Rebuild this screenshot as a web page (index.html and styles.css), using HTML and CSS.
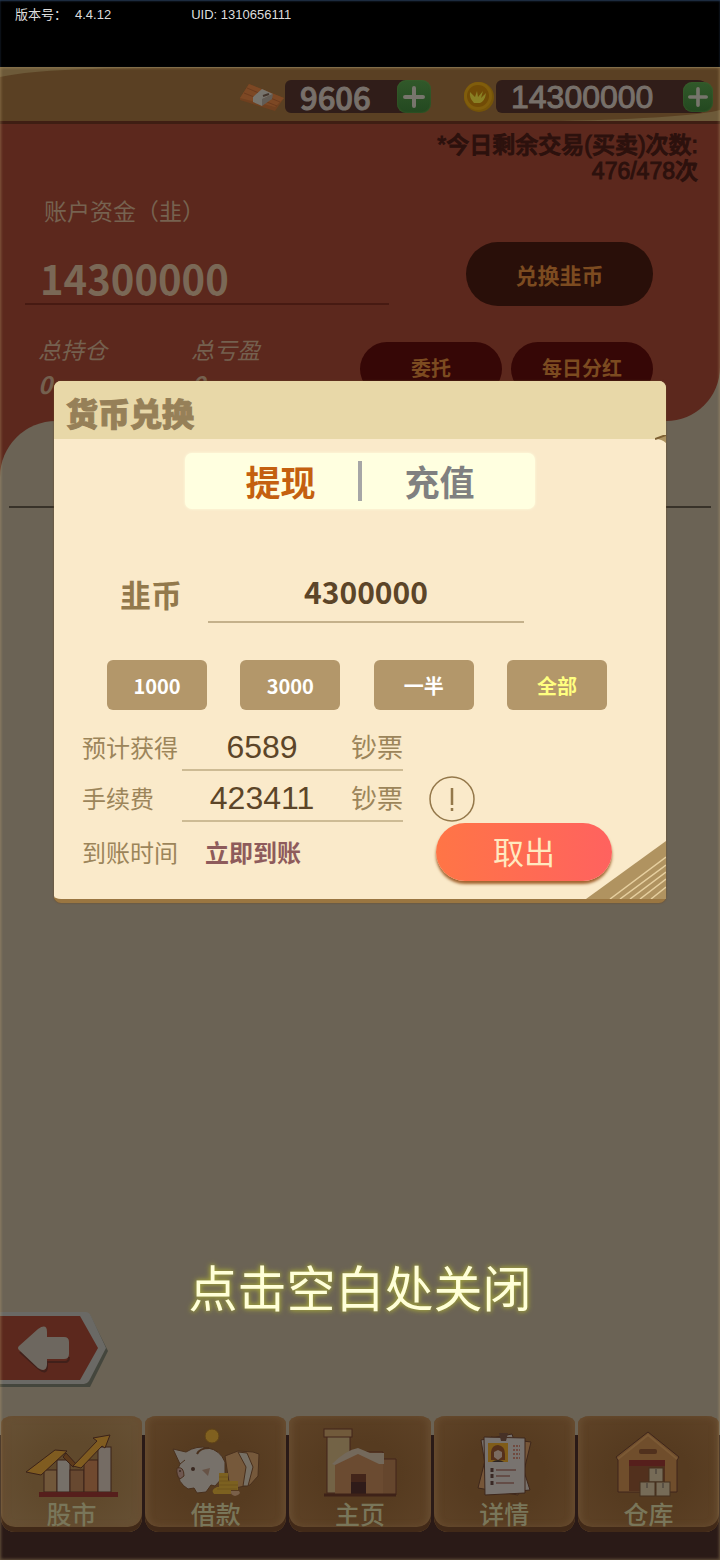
FILE: index.html
```html
<!DOCTYPE html>
<html lang="zh-CN">
  <head>
    <meta charset="UTF-8" />
    <meta name="viewport" content="width=device-width, initial-scale=1.0" />
    <title>货币兑换</title>
    <link rel="stylesheet" href="styles.css">
  </head>
  <body>
    <div class="status">
      <div class="version"><span>版本号：</span><span>4.4.12</span></div>
      <span>UID: 1310656111</span>
    </div>
    <div class="stage">
      <header class="top-bar">
        <svg class="top-bar-shape" viewBox="0 0 720 54" preserveAspectRatio="none" aria-hidden="true">
          <path d="M0 10 Q40 1 160 1 L720 1 V43 Q690 51 560 54 L0 54 Z" fill="#5a4023" />
        </svg>
        <div class="currency">
          <svg width="46" height="34" viewBox="0 0 46 34" aria-hidden="true">
            <path d="M1 18 L10 4 L45 18 L36 31 L1 20 Z" fill="#70401f" />
            <path d="M1 18 L10 4 L45 18 L36 27 Z" fill="#7d4824" />
            <path d="M8 8 L41 22 M5 13 L38 26" stroke="#6b3b1d" stroke-width="1" />
            <path d="M14 17 L23 9 L34 14 L24 19 L23 26 L14 22 Z" fill="#77746d" />
            <path d="M23 19 L34 14 L33 19 L23 26 Z" fill="#625c55" />
            <path d="M24 16 L30 14" stroke="#43352c" stroke-width="2" />
          </svg>
          <div class="pill">
            <span class="cash-value">9606</span>
            <button class="plus" aria-label="增加钞票">
              <svg width="22" height="22" viewBox="0 0 22 22"><path d="M11 2 V20 M2 11 H20" /></svg>
            </button>
          </div>
        </div>
        <div class="currency">
          <svg width="33" height="34" viewBox="0 0 33 34" aria-hidden="true">
            <circle cx="16" cy="17" r="15" fill="#755409" />
            <circle cx="15" cy="16" r="14" fill="#805d0c" />
            <circle cx="15" cy="16" r="11" fill="#714b06" />
            <path d="M11 23 Q6 18 7 12 L12 17 L14 11 L15 17 L20 11 L18 18 L23 13 Q22 21 17 23 Z" fill="#898024" />
          </svg>
          <div class="pill pill-wide">
            <span class="coin-value">14300000</span>
            <button class="plus plus-small" aria-label="增加韭币">
              <svg width="20" height="20" viewBox="0 0 22 22"><path d="M11 2 V20 M2 11 H20" /></svg>
            </button>
          </div>
        </div>
      </header>

      <section class="account">
        <p class="trades">*今日剩余交易(买卖)次数:<br>476/478次</p>
        <p class="account-label">账户资金（韭）</p>
        <div class="account-row">
          <div class="amount">14300000</div>
          <button class="exchange">兑换韭币</button>
        </div>
        <div class="account-row totals-row">
          <div class="totals">
            <div>总持仓<b>0</b></div>
            <div>总亏盈<b>0</b></div>
          </div>
          <div class="actions">
            <button>委托</button>
            <button>每日分红</button>
          </div>
        </div>
      </section>

      <div class="sheet-back">
        <main class="sheet">
          <hr>
          <a class="back" href="#" aria-label="返回">
            <svg width="110" height="78" viewBox="0 0 110 78">
              <path d="M0 3 H90 L108 39 L90 75 H0 Z" fill="#44463d" />
              <path d="M0 0 H86 Q89 0 91 4 L106 36 L89 69 Q87 72 84 72 H0 Z" fill="#6a6965" />
              <path d="M0 4 H80 L98 36 L80 68 H0 Z" fill="#5c281d" />
              <path d="M20 40 L39 57 Q47 63 47 54 V50 H65 Q69 50 69 45" fill="none" stroke="#41201a" stroke-width="2" />
              <path d="M19 34 L38 17 Q47 11 47 20 V25 H64 Q69 25 69 30 V42 Q69 47 64 47 H47 V53 Q46 61 38 56 L19 38 Q17 36 19 34 Z" fill="#6d675f" />
            </svg>
          </a>
        </main>
      </div>

      <nav class="tab-bar">
        <a class="tab active" href="#">
          <svg viewBox="0 0 96 72" aria-hidden="true">
            <g stroke="#3b2218" stroke-width="1">
              <rect x="20" y="42" width="13" height="22" fill="#71573a" />
              <rect x="33" y="32" width="13" height="32" fill="#767069" />
              <rect x="46" y="42" width="14" height="22" fill="#674830" />
              <rect x="60" y="32" width="14" height="32" fill="#70492f" />
              <rect x="74" y="19" width="13" height="45" fill="#756c64" />
              <path d="M42 25 L53 37 L49 39 L39 29 Z" fill="#5d3a1b" />
              <path d="M2 44 L31 22 L43 23 L17 47 Z" fill="#805c20" />
              <path d="M49 38 L73 13 L69 10 L86 7 L81 20 L78 18 L57 40 Z" fill="#805c20" />
            </g>
            <rect x="15" y="64" width="79" height="5" fill="#561f1c" />
          </svg>
          <span>股市</span>
        </a>
        <a class="tab" href="#">
          <svg viewBox="0 0 96 72" aria-hidden="true">
            <circle cx="44" cy="8" r="7" fill="#80601f" stroke="#5e4218" />
            <g stroke="#49301d" stroke-width="1">
              <path d="M57 28 L70 23 L85 24 L91 26 L90 48 L82 57 L62 61 Z" fill="#76593b" />
              <path d="M70 24 L79 25 L85 39 L80 58 L75 58 L78 39 Z" fill="#777065" />
              <path d="M5 21 L18 24 Q29 17 40 20 Q52 22 57 34 L57 47 L47 58 L43 57 L38 64 L29 65 L26 60 L20 61 Q10 55 9 43 L12 36 Z" fill="#77716a" />
              <path d="M9 40 Q16 38 16 48 L12 51 Q8 47 9 40 Z" fill="#6e5750" />
              <path d="M12 36 L17 32" />
              <path d="M29 26 Q32 20 41 20" fill="none" stroke-width="2" />
            </g>
            <circle cx="25" cy="41" r="2" fill="#392820" />
            <circle cx="12" cy="43" r="1" fill="#392820" />
            <path d="M34 42 L42 40 L40 48 Z" fill="#675346" />
            <path d="M51 45 H60 V53 H70 V62 H63 V66 H46 Q42 62 49 59 H51 Z" fill="#7c6120" />
            <path d="M51 49 H60 M51 53 H62 M51 57 H70 M49 61 H69" stroke="#6f541c" />
            <path d="M63 63 H71 Q74 66 67 68 Q62 67 63 63 Z" fill="#796049" />
          </svg>
          <span>借款</span>
        </a>
        <a class="tab" href="#">
          <svg viewBox="0 0 96 72" aria-hidden="true">
            <g stroke="#43251a" stroke-width="1">
              <rect x="15" y="8" width="23" height="57" fill="#736346" />
              <rect x="12" y="1" width="28" height="8" fill="#715a3b" />
              <path d="M54 24 H71 V31 H84 V67 H64 Z" fill="#65462d" />
            </g>
            <path d="M23 34 L46 22 L71 36 V67 H23 Z" fill="#6b4b31" />
            <path d="M20 36 Q34 22 46 20 L58 25 H72 V36 L67 36 L46 26 L23 37 Z" fill="#74695b" />
            <rect x="39" y="46" width="15" height="20" fill="#2f1b19" />
            <path d="M39 50 H54" stroke="#43251a" stroke-width="8" />
            <path d="M12 67 H84" stroke="#3e2218" stroke-width="3" />
          </svg>
          <span>主页</span>
        </a>
        <a class="tab" href="#">
          <svg viewBox="0 0 96 72" aria-hidden="true">
            <g stroke="#3e271b" stroke-width="1">
              <path d="M35 9 L75 14 L62 67 L22 60 Z" fill="#765638" />
              <path d="M25 12 L56 6 L74 62 L34 66 Z" fill="#77706a" />
              <path d="M28 9 L69 10 L69 65 L29 67 Z" fill="#78736f" />
            </g>
            <path d="M43 5 H52 L50 13 H45 Z" fill="#463127" />
            <rect x="32" y="15" width="20" height="19" fill="#805c18" />
            <path d="M35 32 V24 Q36 17 42 17 Q49 18 49 26 V32 Z" fill="#55301b" />
            <path d="M38 24 L42 22 L46 24 V29 L42 32 L38 29 Z" fill="#7b6b60" />
            <path d="M36 34 Q42 30 48 34 Z" fill="#2e2523" />
            <path d="M57 18 H64 M57 22 H64 M57 26 H64 M57 30 H64" stroke="#704a40" stroke-width="2" stroke-dasharray="2 1" />
            <path d="M40 42 H60 M40 48 H54 M40 55 H58" stroke="#5e413b" stroke-width="1.5" />
            <path d="M36 40 V44 M36 46 V50 M36 53 V57" stroke="#392824" stroke-width="3" />
          </svg>
          <span>详情</span>
        </a>
        <a class="tab" href="#">
          <svg viewBox="0 0 96 72" aria-hidden="true">
            <path d="M48 4 L79 29 L77 32 V64 H18 V32 L16 29 Z" fill="#704e2c" stroke="#3e251b" />
            <path d="M18 31 L48 7 L77 31" fill="none" stroke="#7c5a35" stroke-width="2" />
            <rect x="39" y="21" width="18" height="5" rx="2" fill="#51311d" />
            <rect x="29" y="32" width="36" height="31" fill="#52301d" />
            <rect x="29" y="32" width="36" height="6" fill="#561f1c" />
            <g fill="#766b57" stroke="#44301f" stroke-width="1">
              <rect x="49" y="40" width="14" height="14" />
              <rect x="40" y="54" width="15" height="14" />
              <rect x="56" y="54" width="14" height="14" />
            </g>
            <path d="M56 41 V46 M47 55 V60 M63 55 V60" stroke="#5a5145" stroke-width="2" />
          </svg>
          <span>仓库</span>
        </a>
      </nav>

      <!-- exchange dialog over the market page -->
      <div class="overlay">
        <div class="dialog" role="dialog" aria-labelledby="dialog-title">
          <div class="dialog-header">
            <h1 id="dialog-title">货币兑换</h1>
          </div>
          <svg class="fold" width="11" height="8" viewBox="0 0 11 8" aria-hidden="true">
            <path d="M0 4 L11 0 V8 Q7 4 0 4 Z" fill="#ad9360" />
            <path d="M0 4 L11 0" stroke="#7d6033" stroke-width="2" />
          </svg>
          <form class="dialog-body">
            <div class="mode">
              <button type="button" class="selected">提现</button>
              <button type="button">充值</button>
            </div>
            <div class="coin-row">
              <label for="coins">韭币</label>
              <input type="text" id="coins" value="4300000" />
            </div>
            <div class="presets">
              <button type="button">1000</button>
              <button type="button">3000</button>
              <button type="button">一半</button>
              <button type="button" class="selected">全部</button>
            </div>
            <div class="detail">
              <span class="detail-label">预计获得</span>
              <div class="detail-value"><output>6589</output><span>钞票</span></div>
            </div>
            <div class="detail">
              <span class="detail-label">手续费</span>
              <div class="detail-value"><output>423411</output><span>钞票</span></div>
              <button type="button" class="info" aria-label="手续费说明">
                <svg width="46" height="46" viewBox="0 0 46 46">
                  <circle cx="23" cy="23" r="22" fill="none" stroke="#94784a" stroke-width="1.5" />
                  <path d="M23 12 V29 M23 32 V35" stroke="#94784a" stroke-width="2.5" />
                </svg>
              </button>
            </div>
            <div class="detail detail-last">
              <span class="detail-label">到账时间</span>
              <strong>立即到账</strong>
              <button type="submit" class="withdraw">取出</button>
            </div>
          </form>
          <svg class="corner" width="80" height="58" viewBox="0 0 80 58" aria-hidden="true">
            <path d="M0 58 L80 0 V58 Z" fill="#b09360" />
            <path d="M24 58 L80 16 M34 58 L80 24 M44 58 L80 31 M54 58 L80 38 M65 58 L80 46" stroke="#e6cf9f" stroke-width="1.5" />
          </svg>
        </div>
        <button class="close-hint">点击空白处关闭</button>
      </div>
    </div>
  </body>
</html>
```

FILE: styles.css
```css
* {
  box-sizing: border-box;
}
body {
  margin: 0;
  min-height: 100vh;
  display: flex;
  flex-direction: column;
  background-color: #6b6355;
  font-family: "Noto Sans CJK SC", sans-serif;
}
button {
  padding: 0;
  border: none;
  background: none;
  font-family: inherit;
  cursor: pointer;
}
p,
h1 {
  margin: 0;
}
svg {
  display: block;
}

/* version line */
.status {
  display: flex;
  gap: 80px;
  height: 67px;
  padding: 5px 15px;
  background-color: #000;
  box-shadow: inset 0 1px 2px #263b56;
  color: #ddd;
  font-family: "Liberation Sans", "Noto Sans CJK SC", sans-serif;
  font-size: 13px;
  line-height: 20px;
}
.version {
  display: flex;
  gap: 8px;
}
.stage {
  position: relative;
  flex-grow: 1;
  display: flex;
  flex-direction: column;
}

/* currencies */
.top-bar {
  position: relative;
  display: flex;
  justify-content: flex-end;
  align-items: center;
  gap: 32px;
  height: 57px;
  padding: 5px 7px 0 0;
  background-color: #6d5a39;
  border-bottom: 3px solid #3f1e13;
}
.top-bar-shape {
  position: absolute;
  top: 0;
  left: 0;
  width: 100%;
  height: 100%;
}
.currency {
  position: relative;
  display: flex;
  align-items: center;
}
.pill {
  display: flex;
  justify-content: space-between;
  align-items: center;
  width: 146px;
  height: 33px;
  padding-left: 15px;
  background-color: #301d19;
  border-radius: 6px 16px 16px 6px;
  color: #77706a;
}
.pill-wide {
  width: 217px;
}
.cash-value {
  font-size: 31px;
  font-weight: 500;
  line-height: 32px;
  -webkit-text-stroke: 1px #77706a;
}
.coin-value {
  font-family: "Liberation Sans", sans-serif;
  font-size: 32px;
  line-height: 32px;
  -webkit-text-stroke: 1px #77706a;
}
.plus {
  display: flex;
  justify-content: center;
  align-items: center;
  width: 34px;
  height: 33px;
  border-radius: 9px;
  background: linear-gradient(#31592a, #234820);
  box-shadow: inset 0 0 2px #41632c;
}
.plus-small {
  width: 30px;
  height: 30px;
}
.plus path {
  stroke: #77756c;
  stroke-width: 4;
  stroke-linecap: round;
}

/* account panel */
.account {
  height: 297px;
  padding-top: 8px;
  background-color: #5c281d;
  border-bottom-right-radius: 54px;
}
.trades {
  padding-right: 22px;
  color: #2c110d;
  font-family: "Liberation Sans", "Noto Sans CJK SC", sans-serif;
  font-size: 23px;
  font-weight: 500;
  line-height: 26px;
  text-align: right;
  -webkit-text-stroke: 1px #2c110d;
}
.account-label {
  margin: 11px 0 17px 44px;
  color: #766250;
  font-size: 23px;
  line-height: 30px;
}
.account-row {
  display: flex;
  justify-content: space-between;
  padding: 0 67px 0 25px;
}
.amount {
  width: 58%;
  height: 63px;
  padding-left: 15px;
  border-bottom: 2px solid #471a12;
  color: #7a6856;
  font-size: 40px;
  font-weight: bold;
  line-height: 72px;
}
.exchange {
  width: 187px;
  height: 64px;
  border-radius: 32px;
  background-color: #290f09;
  color: #7c4b20;
  font-size: 22px;
  font-weight: bold;
}
.totals-row {
  margin-top: 26px;
}
.totals {
  display: flex;
  gap: 84px;
  padding-left: 13px;
  color: #74604f;
  font-size: 23px;
  font-style: italic;
  line-height: 34px;
}
.totals b {
  display: block;
  font-size: 24px;
  line-height: 36px;
}
.actions {
  display: flex;
  gap: 9px;
  padding-top: 10px;
}
.actions button {
  width: 142px;
  height: 54px;
  padding-bottom: 3px;
  border-radius: 27px;
  background-color: #360706;
  color: #7c4b20;
  font-size: 20px;
  font-weight: bold;
}

/* stock list */
.sheet-back {
  flex-grow: 1;
  display: flex;
  background: linear-gradient(90deg, #5c281d 50%, #6b6355 50%);
}
.sheet {
  flex-grow: 1;
  display: flex;
  flex-direction: column;
  justify-content: space-between;
  padding: 85px 0 26px;
  background-color: #6b6355;
  border-top-left-radius: 56px;
}
.sheet hr {
  align-self: stretch;
  height: 2px;
  margin: 0 9px;
  border: none;
  background-color: #383229;
}
.back {
  align-self: flex-start;
}

/* bottom navigation */
.tab-bar {
  display: grid;
  grid-template-columns: repeat(5, 1fr);
  gap: 3px;
  padding: 0 1px 28px;
  background: linear-gradient(#6b6355 19px, #2a1a17 19px);
}
.tab {
  display: flex;
  flex-direction: column;
  align-items: center;
  height: 116px;
  padding-top: 12px;
  border-radius: 12px 12px 14px 14px / 8px 8px 14px 14px;
  background: radial-gradient(#563b20 40%, #5f4327);
  box-shadow: inset 0 -5px #412918, inset 0 -2px 6px 3px #684d31;
  color: #79765a;
  font-size: 25px;
  font-weight: 500;
  line-height: 26px;
  text-decoration: none;
}
.tab.active {
  background: radial-gradient(#60492c 40%, #685236);
}
.tab svg {
  width: 96px;
  height: 72px;
}

/* dialog */
.overlay {
  position: absolute;
  top: 0;
  right: 0;
  bottom: 0;
  left: 0;
  display: flex;
  flex-direction: column;
  align-items: center;
  padding-top: 314px;
  box-shadow: inset 0 0 3px 1px rgba(205, 180, 125, 0.35);
}
.dialog {
  position: relative;
  width: 85%;
  background-color: #faeaca;
  border-bottom: 4px solid #9a7641;
  border-radius: 7px;
  box-shadow: 0 0 2px #6b4a25;
}
.dialog-header {
  height: 58px;
  padding-left: 12px;
  background-color: #e8d8a8;
  border-radius: 7px 7px 0 0;
}
.dialog-header h1 {
  color: #968058;
  font-size: 32px;
  font-weight: 900;
  line-height: 62px;
  -webkit-text-stroke: 1px #968058;
}
.fold {
  position: absolute;
  top: 54px;
  right: 0;
}
.corner {
  position: absolute;
  right: 0;
  bottom: 0;
}
.dialog-body {
  padding: 14px 28px 18px;
}
.mode {
  display: flex;
  width: 350px;
  height: 56px;
  margin: 0 auto;
  background-color: #ffffe0;
  border-radius: 7px;
  box-shadow: 0 0 3px #ffffe0;
}
.mode button {
  position: relative;
  flex: 1;
  padding-right: 16px;
  color: #808080;
  font-size: 35px;
  font-weight: bold;
  line-height: 56px;
}
.mode .selected {
  padding: 0 0 0 16px;
  color: #c4600f;
}
.mode .selected::after {
  content: "";
  position: absolute;
  top: 8px;
  right: -2px;
  width: 4px;
  height: 40px;
  background-color: #a6a6a6;
}
.coin-row {
  display: flex;
  gap: 26px;
  margin-top: 56px;
  padding: 0 114px 0 38px;
}
.coin-row label {
  color: #92794c;
  font-size: 31px;
  font-weight: bold;
  line-height: 58px;
}
.coin-row input {
  flex: 1;
  min-width: 0;
  height: 58px;
  padding: 0 0 4px;
  border: none;
  border-bottom: 2px solid #c4b18b;
  background: none;
  color: #5c4528;
  font-family: inherit;
  font-size: 30px;
  font-weight: bold;
  text-align: center;
  outline: none;
}
.presets {
  display: flex;
  justify-content: space-between;
  margin: 37px 31px 12px 25px;
}
.presets button {
  width: 100px;
  height: 50px;
  border-radius: 6px;
  background-color: #b3976a;
  color: #fff;
  font-size: 20px;
  font-weight: bold;
}
.presets .selected {
  color: #ffff80;
}
.detail {
  display: flex;
  align-items: center;
  height: 51px;
}
.detail-last {
  height: 57px;
}
.detail-label {
  width: 100px;
  padding-bottom: 2px;
  color: #9c855a;
  font-size: 24px;
}
.detail-value {
  display: flex;
  align-items: center;
  width: 221px;
  height: 47px;
  border-bottom: 2px solid #cdbb94;
}
.detail-value output {
  width: 160px;
  padding-top: 2px;
  color: #5c4528;
  font-family: "Liberation Sans", sans-serif;
  font-size: 32px;
  text-align: center;
}
.detail-value span {
  margin-left: 9px;
  padding-bottom: 2px;
  color: #9c855a;
  font-size: 26px;
}
.info {
  margin-left: 26px;
}
.detail strong {
  margin-left: 23px;
  padding-bottom: 2px;
  color: #8e5b5b;
  font-size: 24px;
}
.withdraw {
  align-self: flex-end;
  width: 176px;
  height: 58px;
  margin-left: auto;
  margin-right: 26px;
  padding-bottom: 3px;
  flex-shrink: 0;
  border-radius: 29px;
  background: linear-gradient(90deg, #ff7546, #ff625f);
  box-shadow: 0 3px 3px #a2632f;
  color: #ffe9c0;
  font-size: 31px;
}
.close-hint {
  margin-top: 348px;
  color: #ffffd8;
  font-size: 49px;
  line-height: 70px;
  text-shadow: 0 0 4px #a2a33c, 0 0 6px #a2a33c;
}
```
